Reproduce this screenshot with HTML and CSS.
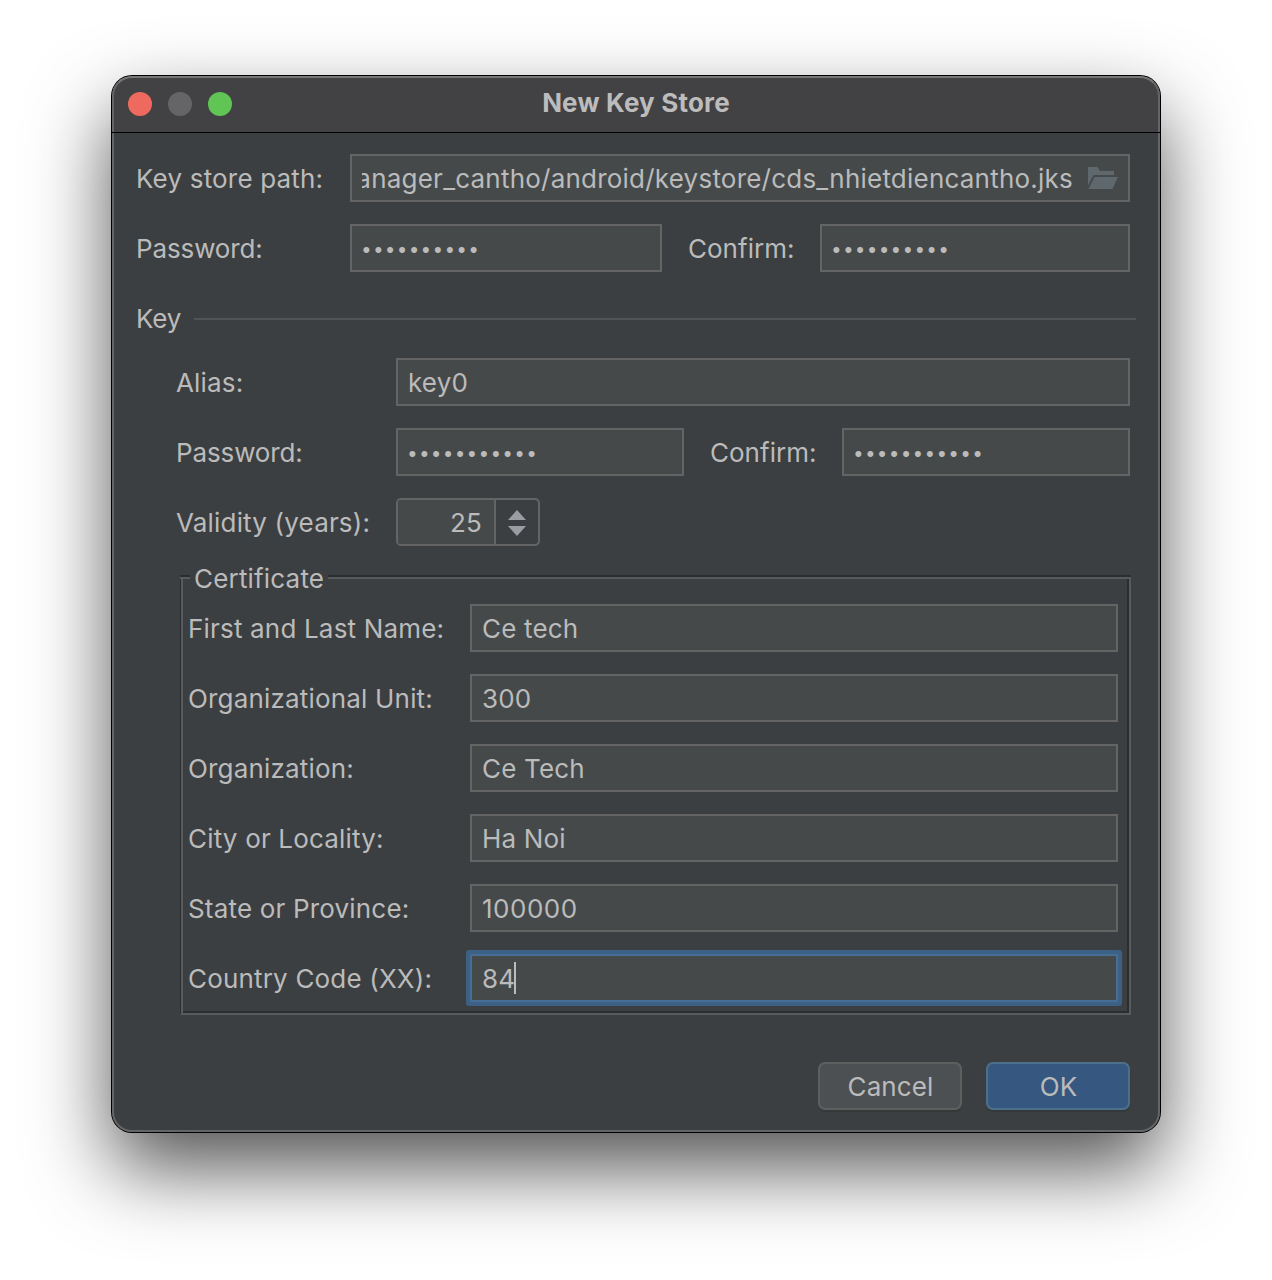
FILE: index.html
```html
<!DOCTYPE html>
<html lang="en">
<head>
<meta charset="utf-8">
<title>New Key Store</title>
<link rel="stylesheet" href="styles.css">
</head>
<body>
<main class="window">
  <header class="titlebar">
    <div class="lights"><span class="light close"></span><span class="light minimize"></span><span class="light zoom"></span></div>
    <h1 class="title">New Key Store</h1>
  </header>
  <form class="content">
    <div class="row store">
      <label class="label">Key store path:</label>
      <div class="field path">
        <span class="path-clip"><span class="path-text">anager_cantho/android/keystore/cds_nhietdiencantho.jks</span></span>
        <svg class="folder" width="30" height="22" viewBox="0 0 30 22"><path d="M0 0H9.5L12 4H26V8H5.5L0 18.5Z"/><path d="M6.5 10H30L24.500 22H0.500Z"/></svg>
      </div>
    </div>
    <div class="row store">
      <label class="label snug">Password:</label>
      <div class="field store-pass"><span class="dots">••••••••••</span></div>
      <label class="label confirm">Confirm:</label>
      <div class="field grow"><span class="dots">••••••••••</span></div>
    </div>
    <div class="separator"><span class="snug">Key</span><i class="rule"></i></div>
    <section class="key">
      <div class="row">
        <label class="label">Alias:</label>
        <div class="field grow">key0</div>
      </div>
      <div class="row">
        <label class="label snug">Password:</label>
        <div class="field grow"><span class="dots">•••••••••••</span></div>
        <label class="label confirm">Confirm:</label>
        <div class="field grow"><span class="dots">•••••••••••</span></div>
      </div>
      <div class="row">
        <label class="label">Validity (years):</label>
        <div class="spinner">
          <span class="value">25</span>
          <span class="arrows"><svg width="18" height="26" viewBox="0 0 18 26"><path d="M9 0L18 10H0Z"/><path d="M0 16H18L9 26Z"/></svg></span>
        </div>
      </div>
    </section>
    <section class="certificate">
      <div class="legend"><i class="edge lead"></i><span>Certificate</span><i class="edge"></i></div>
      <div class="frame">
        <div class="row"><label class="label">First and Last Name:</label><div class="field grow">Ce tech</div></div>
        <div class="row"><label class="label">Organizational Unit:</label><div class="field grow">300</div></div>
        <div class="row"><label class="label">Organization:</label><div class="field grow">Ce Tech</div></div>
        <div class="row"><label class="label">City or Locality:</label><div class="field grow">Ha Noi</div></div>
        <div class="row"><label class="label">State or Province:</label><div class="field grow digits">100000</div></div>
        <div class="row"><label class="label">Country Code (XX):</label><div class="field grow focused">84<i class="caret"></i></div></div>
      </div>
    </section>
    <footer class="actions">
      <button type="button" class="button">Cancel</button>
      <button type="button" class="button primary">OK</button>
    </footer>
  </form>
</main>
</body>
</html>
```
FILE: styles.css
```css
* { box-sizing: border-box; }

body {
  margin: 0;
  height: 1280px;
  padding: 76px 112px;
  background: #fff;
  overflow: hidden;
  font: 26px/32px Inter, "Liberation Sans", sans-serif;
  letter-spacing: .18px;
  color: #bbb;
}

.window {
  position: relative;
  display: flex;
  flex-direction: column;
  width: 1048px;
  height: 1056px;
  border-radius: 20px;
  background: #3c3f41;
  box-shadow: 0 0 0 1px #000, 0 36px 80px rgba(0, 0, 0, .68);
}

/* light rim along the inside of the window edge */
.window::after {
  content: "";
  position: absolute;
  inset: 0;
  border: 2px solid #636566;
  border-top-color: #777778;
  border-radius: 20px;
  pointer-events: none;
}

.titlebar {
  display: grid;
  grid-template-columns: 120px 1fr 120px;
  align-items: center;
  flex: none;
  height: 57px;
  padding: 0 16px 1px;
  border-radius: 20px 20px 0 0;
  background: #424143;
}

/* divider drawn over the rim, from edge to edge */
.titlebar::after {
  content: "";
  position: absolute;
  z-index: 1;
  top: 56px;
  left: 0;
  right: 0;
  height: 1px;
  background: #000;
}

.lights { display: flex; gap: 16px; }
.light { width: 24px; height: 24px; border-radius: 50%; }
.close { background: #ee6a5f; }
.minimize { background: #656466; }
.zoom { background: #61c555; }

.title {
  margin: 0 0 2px;
  text-align: center;
  font-size: 26px;
  line-height: 32px;
  font-weight: 700;
  color: #bdbcbd;
}

.content {
  display: flex;
  flex-direction: column;
  padding: 21px 24px 0;
}

.row { display: flex; align-items: center; height: 48px; }
.row + .row { margin-top: 22px; }
.label { flex: none; padding-top: 2px; white-space: nowrap; }
.store { margin-right: 6px; }
.store .label { width: 214px; }
.snug { letter-spacing: -.12px; }
.row .label.confirm { width: 106px; margin: 0 26px; letter-spacing: .02px; }

.field {
  display: flex;
  align-items: center;
  flex: none;
  height: 48px;
  padding: 2px 10px 0;
  border: 2px solid #646464;
  background: #45494a;
  white-space: nowrap;
}
.grow { flex: 1 1 0; min-width: 0; }
.path { width: 780px; }
.store-pass { width: 312px; }
.path-clip { display: flex; justify-content: flex-end; width: 711px; overflow: hidden; }
.path-text { flex: none; letter-spacing: .22px; }
.folder { margin: -2px 0 0 15px; fill: #5f686d; }
.dots { margin: 1px 0 0 -1px; font-size: 19px; letter-spacing: 1.23px; }
.digits { letter-spacing: .5px; }

.separator { display: flex; align-items: center; gap: 13px; height: 32px; margin-top: 31px; }
.rule { flex: 1; height: 2px; background: #515355; }

.key { margin: 23px 6px 0 40px; }
.key .row > .label:first-child { width: 220px; }

.spinner {
  display: flex;
  width: 144px;
  height: 48px;
  border: 2px solid #646464;
  border-radius: 5px;
  overflow: hidden;
}
.value {
  width: 98px;
  padding: 7px 12px 0 0;
  border-right: 2px solid #646464;
  background: #45494a;
  text-align: right;
}
.arrows { display: flex; flex: 1; align-items: center; justify-content: center; padding-top: 2px; fill: #9a9da1; }

.certificate { margin: 17px 5px 0 44px; }
.legend { display: flex; align-items: center; height: 32px; }
.legend span { padding: 0 4px; }
.edge { flex: 1; height: 4px; margin-top: -4px; background: linear-gradient(#2b2d2e 50%, #575b5d 50%); }
.edge.lead { flex: none; width: 10px; }
.frame {
  height: 436px;
  margin-top: -16px;
  padding: 25px 11px 0 7px;
  border: solid #575b5d;
  border-width: 0 2px 2px 0;
  border-left: 1px solid #2b2d2e;
  box-shadow: inset 2px 0 #575b5d, inset -2px -2px #2b2d2e;
}
.frame .label { width: 282px; }

.focused {
  border-color: #466d94;
  border-radius: 1px;
  box-shadow: 0 0 0 4px #3d6185;
}
.caret { width: 2px; height: 32px; margin: -2px 0 0 -1px; background: #bbb; }

.actions { display: flex; justify-content: flex-end; gap: 24px; margin: 47px 6px 0 0; }
.button {
  width: 144px;
  height: 48px;
  padding: 2px 0 0 1px;
  border: 2px solid #5e6060;
  border-radius: 7px;
  background: #4c5052;
  box-shadow: 0 2px 1px #36393a;
  color: #bbb;
  font: inherit;
  letter-spacing: .1px;
}
.primary { border-color: #4c708c; background: #365880; }
```
